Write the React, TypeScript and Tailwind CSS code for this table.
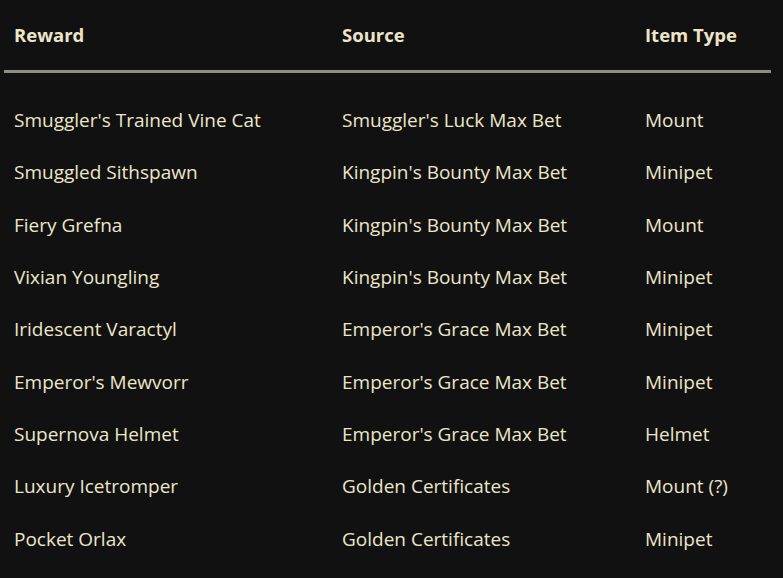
import React from "react";

const rows: [string, string, string][] = [
  ["Smuggler's Trained Vine Cat", "Smuggler's Luck Max Bet", "Mount"],
  ["Smuggled Sithspawn", "Kingpin's Bounty Max Bet", "Minipet"],
  ["Fiery Grefna", "Kingpin's Bounty Max Bet", "Mount"],
  ["Vixian Youngling", "Kingpin's Bounty Max Bet", "Minipet"],
  ["Iridescent Varactyl", "Emperor's Grace Max Bet", "Minipet"],
  ["Emperor's Mewvorr", "Emperor's Grace Max Bet", "Minipet"],
  ["Supernova Helmet", "Emperor's Grace Max Bet", "Helmet"],
  ["Luxury Icetromper", "Golden Certificates", "Mount (?)"],
  ["Pocket Orlax", "Golden Certificates", "Minipet"],
];

export default function App() {
  return (
    <div
      className="w-[783px] h-[578px] overflow-hidden bg-[#111111] text-[#ece6c9]"
      style={{ fontFamily: '"Open Sans", "Noto Sans", sans-serif' }}
    >
      <div className="ml-[4px] w-[767px]">
        <div className="grid grid-cols-[338px_303px_126px] h-[73px] border-b-[3px] border-[#8f8e80] items-center text-[18.5px] font-bold">
          <div className="pl-[10px]">Reward</div>
          <div>Source</div>
          <div>Item Type</div>
        </div>
        <div className="pt-[21px]">
          {rows.map((r, i) => (
            <div
              key={i}
              className="grid grid-cols-[338px_303px_126px] h-[52.33px] items-center text-[19px]"
            >
              <div className="pl-[10px]">{r[0]}</div>
              <div>{r[1]}</div>
              <div>{r[2]}</div>
            </div>
          ))}
        </div>
      </div>
    </div>
  );
}
